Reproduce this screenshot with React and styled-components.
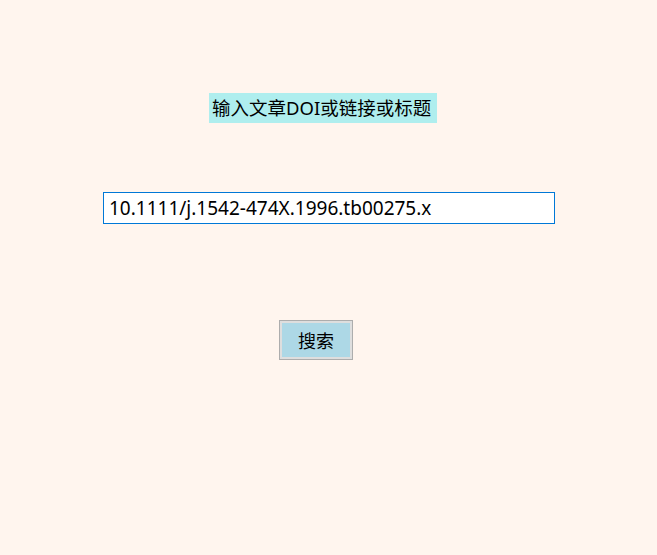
import React from "react";
import styled, { createGlobalStyle } from "styled-components";

const GlobalStyle = createGlobalStyle`
  html, body {
    margin: 0;
    padding: 0;
    background: #fff5ee;
  }
  body {
    font-family: "Noto Sans", "Noto Sans CJK SC", sans-serif;
  }
`;

const Page = styled.div`
  min-height: 555px;
  display: flex;
  flex-direction: column;
  align-items: flex-start;
  padding-top: 93px;
  box-sizing: border-box;
`;

const Label = styled.div`
  margin-left: ${({ offset }) => offset}px;
  background: #afeeee;
  color: #000;
  font-size: 18.5px;
  height: 30px;
  line-height: 30px;
  padding: 0 6px 0 3px;
  white-space: nowrap;
`;

const SearchInput = styled.input`
  margin-top: 69px;
  margin-left: ${({ offset }) => offset}px;
  width: 452px;
  height: 32px;
  box-sizing: border-box;
  border: 1px solid #0078d7;
  background: #fff;
  padding: 0 5px;
  font-family: inherit;
  font-size: 19px;
  color: #000;
  caret-color: #000;
  outline: none;
`;

const Button = styled.button`
  margin-top: 96px;
  margin-left: ${({ offset }) => offset}px;
  width: 74px;
  height: 40px;
  box-sizing: border-box;
  border: 1px solid #adadad;
  box-shadow: inset 0 0 0 2px #dedede;
  background: #add8e6;
  font-family: inherit;
  font-size: 18px;
  color: #000;
  padding: 0;
  cursor: pointer;
`;

export default function App() {
  return (
    <>
      <GlobalStyle />
      <Page>
        <Label offset={209}>输入文章DOI或链接或标题</Label>
        <SearchInput
          offset={103}
          autoFocus
          defaultValue="10.1111/j.1542-474X.1996.tb00275.x"
        />
        <Button offset={279}>搜索</Button>
      </Page>
    </>
  );
}
